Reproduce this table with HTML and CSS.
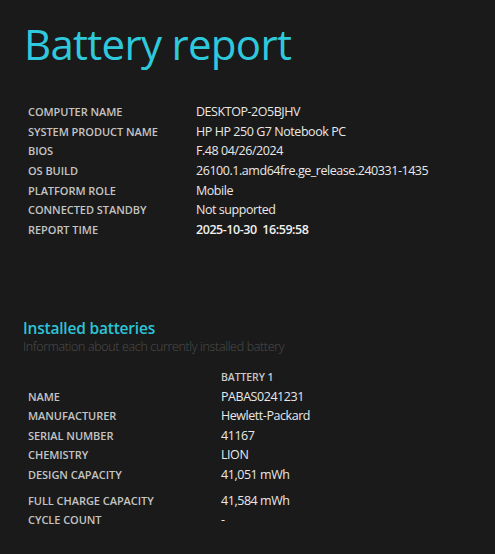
FILE: index.html
```html
<!DOCTYPE html>
<html>
<head>
<meta charset="utf-8">
<link rel="stylesheet" href="styles.css">
</head>
<body>
<h1 class="title">Battery report</h1>
<div class="info">
  <div class="label">COMPUTER NAME</div><div class="value">DESKTOP-2O5BJHV</div>
  <div class="label">SYSTEM PRODUCT NAME</div><div class="value">HP HP 250 G7 Notebook PC</div>
  <div class="label">BIOS</div><div class="value">F.48 04/26/2024</div>
  <div class="label">OS BUILD</div><div class="value">26100.1.amd64fre.ge_release.240331-1435</div>
  <div class="label">PLATFORM ROLE</div><div class="value">Mobile</div>
  <div class="label">CONNECTED STANDBY</div><div class="value">Not supported</div>
  <div class="label">REPORT TIME</div><div class="value strong">2025-10-30&nbsp;&nbsp;16:59:58</div>
</div>
<h2 class="section">Installed batteries</h2>
<div class="subtitle">Information about each currently installed battery</div>
<div class="batteries">
  <div class="label"></div><div class="colhead">BATTERY 1</div>
  <div class="label">NAME</div><div class="value">PABAS0241231</div>
  <div class="label">MANUFACTURER</div><div class="value">Hewlett-Packard</div>
  <div class="label">SERIAL NUMBER</div><div class="value">41167</div>
  <div class="label">CHEMISTRY</div><div class="value">LION</div>
  <div class="label">DESIGN CAPACITY</div><div class="value">41,051 mWh</div>
  <div class="label tall">FULL CHARGE CAPACITY</div><div class="value tall">41,584 mWh</div>
  <div class="label">CYCLE COUNT</div><div class="value">-</div>
</div>
</body>
</html>
```
FILE: styles.css
```css
html, body {
  margin: 0;
  padding: 0;
  background: #1a1a1a;
}
body {
  font-family: "Open Sans", "Noto Sans", sans-serif;
  color: #e6e6e6;
  height: 554px;
  overflow: hidden;
}
.title {
  margin: 0;
  padding: 16px 0 0 24px;
  font-size: 42px;
  font-weight: 400;
  line-height: 56px;
  color: #2fc9dd;
  letter-spacing: -0.7px;
}
.info {
  display: grid;
  grid-template-columns: 168px 1fr;
  grid-auto-rows: 19.6px;
  align-items: center;
  padding: 30px 0 0 28px;
}
.label {
  font-size: 11px;
  font-weight: 600;
  color: #c4c4c4;
  letter-spacing: -0.05px;
}
.value {
  font-size: 12.5px;
  color: #e8e8e8;
  letter-spacing: -0.45px;
}
.strong {
  font-weight: 600;
  color: #f0f0f0;
}
.section {
  margin: 0;
  padding: 79px 0 0 23px;
  font-size: 15.5px;
  font-weight: 600;
  line-height: 20px;
  color: #2cc4d6;
  letter-spacing: -0.2px;
}
.subtitle {
  padding: 0 0 0 23px;
  font-size: 12.5px;
  font-weight: 300;
  color: #4e4e4e;
  line-height: 18px;
  letter-spacing: -0.35px;
}
.batteries {
  display: grid;
  grid-template-columns: 193px 1fr;
  grid-auto-rows: minmax(19.5px, auto);
  align-items: center;
  padding: 11px 0 0 28px;
}
.colhead {
  font-size: 10.5px;
  font-weight: 600;
  color: #c8c8c8;
  letter-spacing: -0.1px;
}
.tall {
  box-sizing: border-box;
  height: 26px;
  padding-top: 6px;
  display: flex;
  align-items: center;
}
```
